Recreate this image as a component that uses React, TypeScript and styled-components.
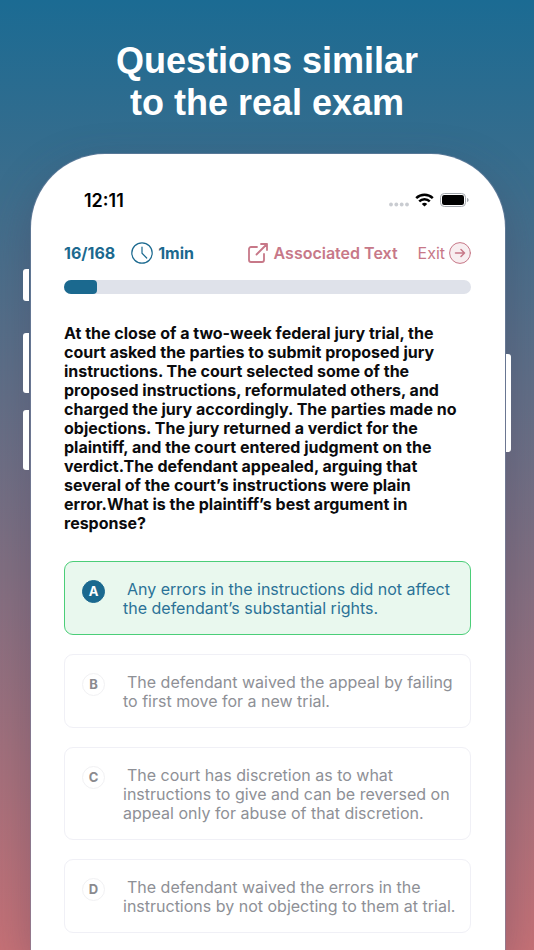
import React, { useState } from "react";
import styled, { createGlobalStyle, css } from "styled-components";

const BLUE = "#1b698f";
const ROSE = "#c77888";

const GlobalStyle = createGlobalStyle`
  *, *::before, *::after { box-sizing: border-box; }
  body {
    margin: 0;
    font-family: Inter, "Liberation Sans", sans-serif;
    font-size: 16px;
    line-height: 19px;
  }
`;

const Page = styled.main`
  min-height: 100vh;
  display: flex;
  flex-direction: column;
  overflow: hidden;
  background: linear-gradient(180deg, #1b6b93 0%, #3c6d8c 20%, #c67176 100%);
`;

const Headline = styled.h1`
  margin: 0;
  padding: 40px 24px 30px;
  color: #fff;
  font: bold 36px/42px "Liberation Sans", sans-serif;
  text-align: center;
  white-space: pre-line;
`;

const Device = styled.div`
  flex: 1;
  display: grid;
  grid-template-columns: 31px minmax(0, 1fr) 29px;
`;

const Rail = styled.div<{ $side: "left" | "right" }>`
  display: flex;
  flex-direction: column;
  position: relative;
  z-index: 1;
  ${({ $side }) =>
    $side === "left"
      ? css`align-items: flex-end; padding: 115px 2px 0 0;`
      : css`align-items: flex-start; padding: 200px 0 0 1px;`}
`;

const SideKey = styled.span<{ $height: number; $gap?: number; $side: "left" | "right" }>`
  width: ${({ $side }) => ($side === "left" ? 6 : 5)}px;
  height: ${({ $height }) => $height}px;
  margin-bottom: ${({ $gap = 0 }) => $gap}px;
  border-radius: ${({ $side }) => ($side === "left" ? "3px 0 0 3px" : "0 3px 3px 0")};
  background: #fff;
`;

const Screen = styled.section`
  padding: 36px 34px 17px 33px;
  border-radius: 74px 74px 0 0;
  background: #fff;
  box-shadow: 0 0 0 1px rgba(120, 135, 165, 0.5), 0 16px 44px rgba(70, 60, 90, 0.35);
`;

const StatusBar = styled.div`
  display: flex;
  justify-content: space-between;
  align-items: center;
  height: 20px;
  padding: 0 2px 0 20px;
`;

const Clock = styled.time`
  color: #000;
  font-size: 18px;
  font-weight: 600;
`;

const StatusIcons = styled.div`
  display: flex;
  align-items: center;
  gap: 6px;
`;

const Toolbar = styled.header`
  display: flex;
  align-items: center;
  height: 24px;
  margin-top: 31px;
  color: ${BLUE};
  font-weight: 700;
  white-space: nowrap;
`;

const Timer = styled.span`
  display: flex;
  align-items: center;
  gap: 5px;
  margin: 0 auto 0 16px;
`;

const TextButton = styled.button<{ $light?: boolean }>`
  display: flex;
  align-items: center;
  gap: ${({ $light }) => ($light ? 4 : 6)}px;
  margin: 0 0 0 ${({ $light }) => ($light ? 20 : 0)}px;
  padding: 0;
  border: 0;
  background: none;
  color: ${ROSE};
  font: inherit;
  font-weight: ${({ $light }) => ($light ? 400 : 600)};
  cursor: pointer;
`;

const Track = styled.div`
  height: 14px;
  margin-top: 15px;
  border-radius: 7px;
  overflow: hidden;
  background: #dfe2ea;
`;

const Fill = styled.div`
  height: 100%;
  border-radius: 0 4px 4px 0;
  background: ${BLUE};
`;

const Question = styled.p`
  margin: 30px 0 28px;
  color: #0b0b0d;
  font-weight: 700;
  white-space: pre-line;
`;

const Options = styled.fieldset`
  display: flex;
  flex-direction: column;
  gap: 19px;
  min-width: 0;
  margin: 0;
  padding: 0;
  border: 0;
`;

const HiddenRadio = styled.input`
  position: absolute;
  width: 1px;
  height: 1px;
  margin: 0;
  opacity: 0;
`;

const Option = styled.label<{ $selected: boolean }>`
  position: relative;
  display: flex;
  align-items: flex-start;
  gap: 18px;
  padding: 18px 10px 16px 17px;
  border: 1px solid ${({ $selected }) => ($selected ? "#4bce78" : "#f0f0f6")};
  border-radius: 9px;
  background: ${({ $selected }) => ($selected ? "#e9f8ee" : "#fff")};
  color: ${({ $selected }) => ($selected ? "#2b7297" : "#8e9096")};
  cursor: pointer;
`;

const Letter = styled.span<{ $selected: boolean }>`
  flex: none;
  width: 23px;
  height: 23px;
  border: 1px solid ${({ $selected }) => ($selected ? BLUE : "#f1f1f3")};
  border-radius: 50%;
  background: ${({ $selected }) => ($selected ? BLUE : "#fff")};
  color: ${({ $selected }) => ($selected ? "#fff" : "#8a8a8e")};
  font-size: 13px;
  font-weight: 700;
  line-height: 21px;
  text-align: center;
`;

const Answer = styled.span`
  white-space: pre-line;
  text-indent: 4px;
`;

const question = `At the close of a two-week federal jury trial, the
court asked the parties to submit proposed jury
instructions. The court selected some of the
proposed instructions, reformulated others, and
charged the jury accordingly. The parties made no
objections. The jury returned a verdict for the
plaintiff, and the court entered judgment on the
verdict.The defendant appealed, arguing that
several of the court’s instructions were plain
error.What is the plaintiff’s best argument in
response?`;

const answers = [
  { id: "A", text: "Any errors in the instructions did not affect\nthe defendant’s substantial rights." },
  { id: "B", text: "The defendant waived the appeal by failing\nto first move for a new trial." },
  { id: "C", text: "The court has discretion as to what\ninstructions to give and can be reversed on\nappeal only for abuse of that discretion." },
  { id: "D", text: "The defendant waived the errors in the\ninstructions by not objecting to them at trial." },
];

const SignalDots = () => (
  <svg width="20" height="14" viewBox="0 0 20 14" fill="#c9ccd1" aria-hidden="true">
    <circle cx="2" cy="11.500" r="1.9" />
    <circle cx="7.3" cy="11.500" r="1.9" />
    <circle cx="12.7" cy="11.500" r="1.9" />
    <circle cx="18" cy="11.500" r="1.9" />
  </svg>
);

const Wifi = () => (
  <svg width="19" height="14" viewBox="0 0 19 14" fill="none" stroke="#000" strokeWidth="2.5" aria-hidden="true">
    <path d="M1.2 5.2a12 12 0 0 1 16.6 0" />
    <path d="M4.2 8.4a7.6 7.6 0 0 1 10.6 0" />
    <path d="M9.5 13.6 6.8 10.9a4 4 0 0 1 5.4 0z" fill="#000" stroke="none" />
  </svg>
);

const Battery = () => (
  <svg width="29" height="14" viewBox="0 0 29 14" aria-hidden="true">
    <rect x="0.5" y="0.5" width="25" height="13" rx="3.8" fill="#fff" stroke="#a3a8ae" />
    <rect x="2" y="2" width="22" height="10" rx="2.2" fill="#000" />
    <path d="M27 5v4c1-.4 1.6-1.1 1.6-2S28 5.400 27 5z" fill="#a3a8ae" />
  </svg>
);

const TimerIcon = () => (
  <svg width="22" height="22" viewBox="0 0 22 22" fill="none" stroke={BLUE} strokeWidth="1.2" strokeLinecap="round" aria-hidden="true">
    <circle cx="11" cy="11" r="10.200" />
    <path d="M11 5v6.200l4.700 4.800" />
  </svg>
);

const OpenIcon = () => (
  <svg width="20" height="20" viewBox="0 0 20 20" fill="none" stroke={ROSE} strokeWidth="1.800" strokeLinecap="round" strokeLinejoin="round" aria-hidden="true">
    <path d="M9 4H3a2 2 0 0 0-2 2v11a2 2 0 0 0 2 2h11a2 2 0 0 0 2-2v-6" />
    <path d="M13 1h6v6M19 1 8.500 11.500" />
  </svg>
);

const ExitIcon = () => (
  <svg width="22" height="22" viewBox="0 0 22 22" fill="none" stroke={ROSE} strokeLinecap="round" strokeLinejoin="round" aria-hidden="true">
    <circle cx="11" cy="11" r="10.400" fill="#f8eef0" strokeWidth="1" />
    <path d="M6.500 11h9M12 7.500l3.500 3.500-3.500 3.500" strokeWidth="1.500" />
  </svg>
);

export default function App() {
  const [selected, setSelected] = useState("A");
  const progress = 8.2;

  return (
    <>
      <GlobalStyle />
      <Page>
        <Headline>{"Questions similar\nto the real exam"}</Headline>
        <Device>
          <Rail $side="left">
            <SideKey $side="left" $height={32} $gap={32} />
            <SideKey $side="left" $height={60} $gap={17} />
            <SideKey $side="left" $height={60} />
          </Rail>
          <Screen>
            <StatusBar>
              <Clock>12:11</Clock>
              <StatusIcons>
                <SignalDots />
                <Wifi />
                <Battery />
              </StatusIcons>
            </StatusBar>
            <Toolbar>
              <span>16/168</span>
              <Timer>
                <TimerIcon />
                1min
              </Timer>
              <TextButton type="button">
                <OpenIcon />
                Associated Text
              </TextButton>
              <TextButton type="button" $light>
                Exit
                <ExitIcon />
              </TextButton>
            </Toolbar>
            <Track role="progressbar" aria-label="Progress" aria-valuemin={0} aria-valuemax={168} aria-valuenow={16}>
              <Fill style={{ width: `${progress}%` }} />
            </Track>
            <Question id="question">{question}</Question>
            <Options aria-labelledby="question">
              {answers.map(({ id, text }) => (
                <Option key={id} $selected={selected === id}>
                  <HiddenRadio
                    type="radio"
                    name="answer"
                    value={id}
                    checked={selected === id}
                    onChange={() => setSelected(id)}
                  />
                  <Letter $selected={selected === id}>{id}</Letter>
                  <Answer>{text}</Answer>
                </Option>
              ))}
            </Options>
          </Screen>
          <Rail $side="right">
            <SideKey $side="right" $height={98} />
          </Rail>
        </Device>
      </Page>
    </>
  );
}
